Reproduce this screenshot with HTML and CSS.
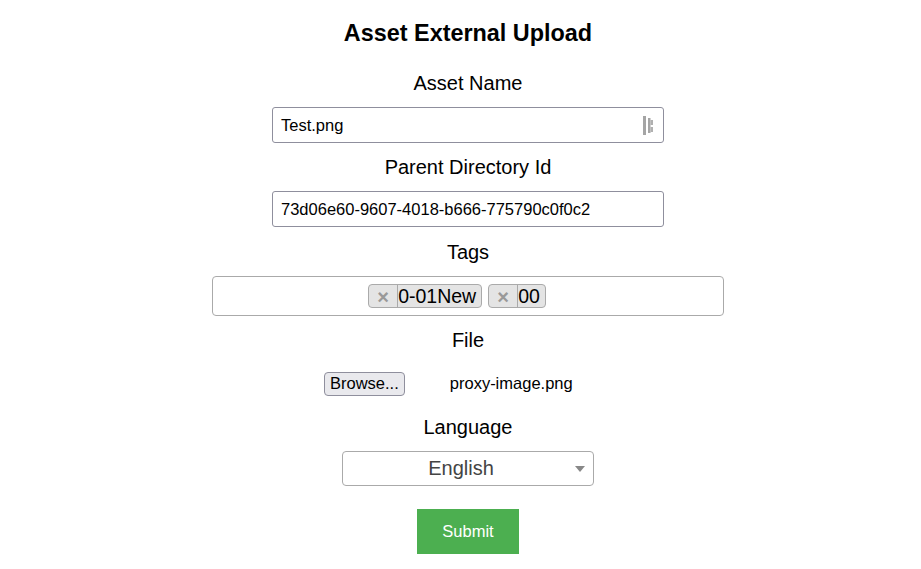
FILE: index.html
```html
<!DOCTYPE html>
<html>
<head>
<meta charset="utf-8">
<link rel="stylesheet" href="styles.css">
</head>
<body>
<form class="form">
  <h1 class="title">Asset External Upload</h1>
  <label class="label">Asset Name</label>
  <div class="field">
    <span class="field-text">Test.png</span>
    <svg class="field-icon" width="11" height="19" viewBox="0 0 11 19">
      <rect x="0" y="0" width="3" height="19" fill="#a5a5a5"/>
      <rect x="5" y="2" width="2.5" height="15" fill="#a5a5a5"/>
      <rect x="7.5" y="4" width="2.5" height="5" fill="#b0b0b0"/>
      <rect x="7.5" y="11" width="2.5" height="5" fill="#b0b0b0"/>
    </svg>
  </div>
  <label class="label">Parent Directory Id</label>
  <div class="field">
    <span class="field-text">73d06e60-9607-4018-b666-775790c0f0c2</span>
  </div>
  <label class="label label-tags">Tags</label>
  <div class="tags">
    <span class="chip"><span class="chip-x">×</span><span class="chip-text">0-01New</span></span>
    <span class="chip"><span class="chip-x">×</span><span class="chip-text">00</span></span>
    <span class="tags-search"></span>
  </div>
  <label class="label">File</label>
  <div class="file-row">
    <span class="browse">Browse...</span>
    <span class="file-name">proxy-image.png</span>
  </div>
  <label class="label">Language</label>
  <div class="select">
    <span class="select-text">English</span>
    <span class="select-arrow"></span>
  </div>
  <button type="button" class="submit">Submit</button>
</form>
</body>
</html>
```
FILE: styles.css
```css
* { box-sizing: border-box; }
html, body { margin: 0; padding: 0; background: #fff; }
body {
  font-family: "Liberation Sans", Arial, sans-serif;
  color: #000;
}
.form {
  display: flex;
  flex-direction: column;
  align-items: center;
  gap: 12px;
  padding: 19px 0 0 15px;
}
.title {
  margin: 0 0 12px;
  font-size: 23.4px;
  line-height: 28px;
  font-weight: bold;
}
.label {
  font-size: 20px;
  line-height: 24px;
}
.label-tags { margin-top: 1px; }
.field {
  width: 392px;
  height: 36px;
  border: 1px solid #8f8f9d;
  border-radius: 3px;
  display: flex;
  align-items: center;
  justify-content: space-between;
  padding: 0 9px 0 8px;
  font-size: 16.5px;
}
.field-icon { display: block; }
.tags {
  width: 512px;
  height: 40px;
  border: 1px solid #aaa;
  border-radius: 4px;
  display: flex;
  align-items: center;
  justify-content: center;
  gap: 6px;
}
.chip {
  display: flex;
  align-items: stretch;
  height: 24px;
  border: 1px solid #aaa;
  border-radius: 4px;
  background: #e4e4e4;
  font-size: 19.5px;
  line-height: 22px;
}
.chip-x {
  width: 29px;
  border-right: 1px solid #aaa;
  color: #999;
  font-weight: bold;
  font-size: 20px;
  text-align: center;
  line-height: 24px;
}
.chip-text { padding: 0 5px 0 0; }
.tags-search { width: 16px; }
.file-row {
  width: 288px;
  height: 39px;
  display: flex;
  align-items: center;
  gap: 45px;
  font-size: 16.5px;
}
.browse {
  height: 24px;
  padding: 0 5px;
  display: flex;
  align-items: center;
  background: #e9e9ed;
  border: 1px solid #8f8f9d;
  border-radius: 4px;
}
.select {
  width: 252px;
  height: 35px;
  border: 1px solid #aaa;
  border-radius: 4px;
  position: relative;
  display: flex;
  align-items: center;
  justify-content: center;
  padding-right: 14px;
}
.select-text {
  font-size: 20px;
  color: #444;
}
.select-arrow {
  position: absolute;
  right: 8px;
  top: 14px;
  width: 0;
  height: 0;
  border-left: 5px solid transparent;
  border-right: 5px solid transparent;
  border-top: 6px solid #888;
}
.submit {
  margin-top: 11px;
  width: 102px;
  height: 45px;
  border: none;
  background: #4caf50;
  color: #fff;
  font-family: "Liberation Sans", Arial, sans-serif;
  font-size: 16.5px;
}
```
